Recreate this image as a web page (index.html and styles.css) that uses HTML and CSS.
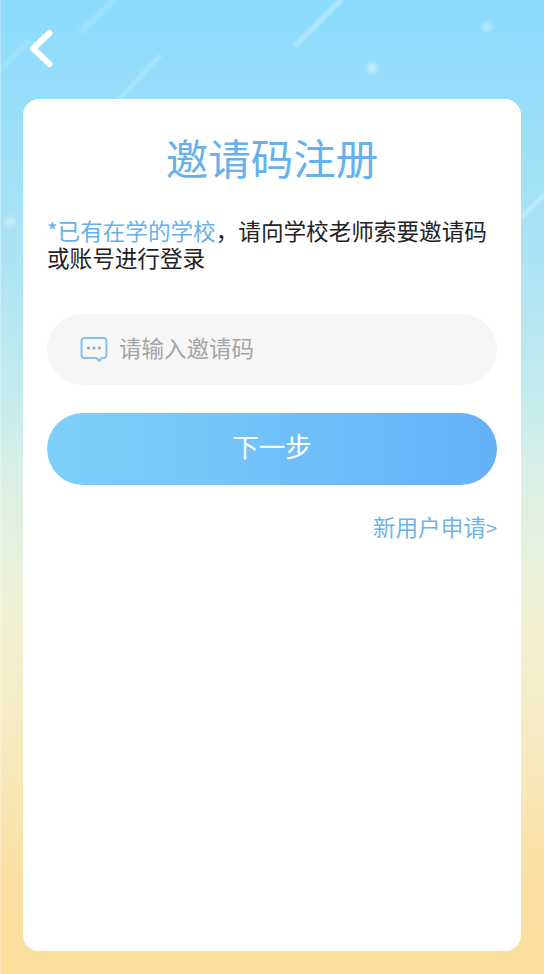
FILE: index.html
```html
<!DOCTYPE html>
<html lang="zh-CN">
<head>
<meta charset="utf-8">
<title>邀请码注册</title>
<link rel="stylesheet" href="styles.css">
</head>
<body>
<div class="screen">
  <svg class="sky" width="544" height="974" viewBox="0 0 544 974" aria-hidden="true">
    <defs>
      <filter id="soft" x="-30%" y="-30%" width="160%" height="160%"><feGaussianBlur stdDeviation="1.500"/></filter>
      <filter id="softer" x="-60%" y="-60%" width="220%" height="220%"><feGaussianBlur stdDeviation="2.500"/></filter>
    </defs>
    <g stroke="#fff" stroke-linecap="round" fill="none" filter="url(#soft)">
      <line x1="82" y1="31" x2="114" y2="0" stroke-width="6" stroke-opacity=".14"/>
      <line x1="296" y1="45" x2="341" y2="0" stroke-width="4" stroke-opacity=".36"/>
      <line x1="118" y1="100" x2="160" y2="56" stroke-width="3" stroke-opacity=".28"/>
      <line x1="0" y1="70" x2="28" y2="42" stroke-width="3.500" stroke-opacity=".16"/>
      <line x1="522" y1="217" x2="544" y2="195" stroke-width="4" stroke-opacity=".3"/>
    </g>
    <g fill="#fff" filter="url(#softer)">
      <circle cx="487" cy="27" r="4.500" opacity=".4"/>
      <circle cx="372" cy="68" r="5" opacity=".5"/>
      <circle cx="507" cy="130" r="5.500" opacity=".45"/>
      <ellipse cx="10" cy="222" rx="6" ry="5" opacity=".35"/>
    </g>
  </svg>
  <header class="topbar">
    <svg class="back" width="26" height="42" viewBox="0 0 26 42" aria-label="返回">
      <path d="M21.500 5 L5 20.500 L21.500 36" fill="none" stroke="#fff" stroke-width="6" stroke-linecap="round" stroke-linejoin="round"/>
    </svg>
  </header>
  <main class="card">
    <h1 class="title">邀请码注册</h1>
    <p class="notice"><span class="accent">*已有在学的学校</span>，请向学校老师索要邀请码或账号进行登录</p>
    <div class="field">
      <svg class="chat" width="28" height="27" viewBox="0 0 28 27" aria-hidden="true">
        <path d="M4.500 2 H23.500 A3 3 0 0 1 26.500 5 V19 A3 3 0 0 1 23.500 22 H21.500 L19.500 25 L16.500 22 H4.500 A3 3 0 0 1 1.500 19 V5 A3 3 0 0 1 4.500 2 Z" fill="none" stroke="#86c1ee" stroke-width="2" stroke-linejoin="round"/>
        <circle cx="8.500" cy="12" r="1.500" fill="#86a9c8"/>
        <circle cx="14" cy="12" r="1.500" fill="#86a9c8"/>
        <circle cx="19.500" cy="12" r="1.500" fill="#86a9c8"/>
      </svg>
      <span class="placeholder">请输入邀请码</span>
    </div>
    <button class="next" type="button"><span class="next-label">下一步</span></button>
    <div class="apply"><a class="apply-link">新用户申请<span class="apply-arrow">&gt;</span></a></div>
  </main>
</div>
</body>
</html>
```
FILE: styles.css
```css
* { box-sizing: border-box; }
html, body { margin: 0; padding: 0; }
body {
  width: 544px;
  height: 974px;
  overflow: hidden;
  font-family: "Noto Sans CJK SC", "Noto Sans", sans-serif;
}
.screen {
  position: relative;
  width: 544px;
  height: 974px;
  padding: 0 23px 23px;
  display: flex;
  flex-direction: column;
  background: linear-gradient(180deg, #8bdcfe 0%, #97defa 10%, #aae3f5 25%, #c2ebef 40%, #d5efe8 47%, #f1f3d6 62%, #f6ecc6 73%, #fbe0a3 90%, #fbdf9b 100%);
  box-shadow: inset 1px 0 rgba(255, 255, 255, .3);
}
.sky { position: absolute; left: 0; top: 0; }
.topbar {
  position: relative;
  height: 99px;
  padding-top: 28px;
  padding-left: 5px;
}
.back { display: block; }
.card {
  position: relative;
  flex: 1;
  width: 498px;
  background: #fff;
  border-radius: 16px;
  padding: 27px 24px 0;
  display: flex;
  flex-direction: column;
}
.title {
  margin: 0;
  text-align: center;
  font-size: 42.500px;
  line-height: 62px;
  font-weight: 400;
  color: #66b1ec;
}
.notice {
  margin: 29px 0 0;
  font-size: 22.600px;
  line-height: 27px;
  color: #222;
}
.accent { color: #66b1ec; }
.field {
  margin-top: 43px;
  height: 71px;
  border-radius: 36px;
  background: #f6f6f6;
  display: flex;
  align-items: center;
  padding-left: 33px;
  gap: 11px;
}
.chat { flex: none; }
.placeholder {
  font-size: 22.500px;
  line-height: 30px;
  margin-top: -6px;
  color: #a5a5a5;
}
.next {
  margin-top: 28px;
  height: 72px;
  border: 0;
  padding: 0 0 8px;
  border-radius: 36px;
  background: linear-gradient(90deg, #7fd0fb 0%, #64b1f8 100%);
  color: #fff;
  font: inherit;
  font-size: 26.500px;
}
.apply {
  margin-top: 25px;
  display: flex;
  justify-content: flex-end;
}
.apply-link {
  font-size: 22.600px;
  line-height: 34px;
  color: #6cb4ea;
}
.apply-arrow { font-size: 20px; }
```
